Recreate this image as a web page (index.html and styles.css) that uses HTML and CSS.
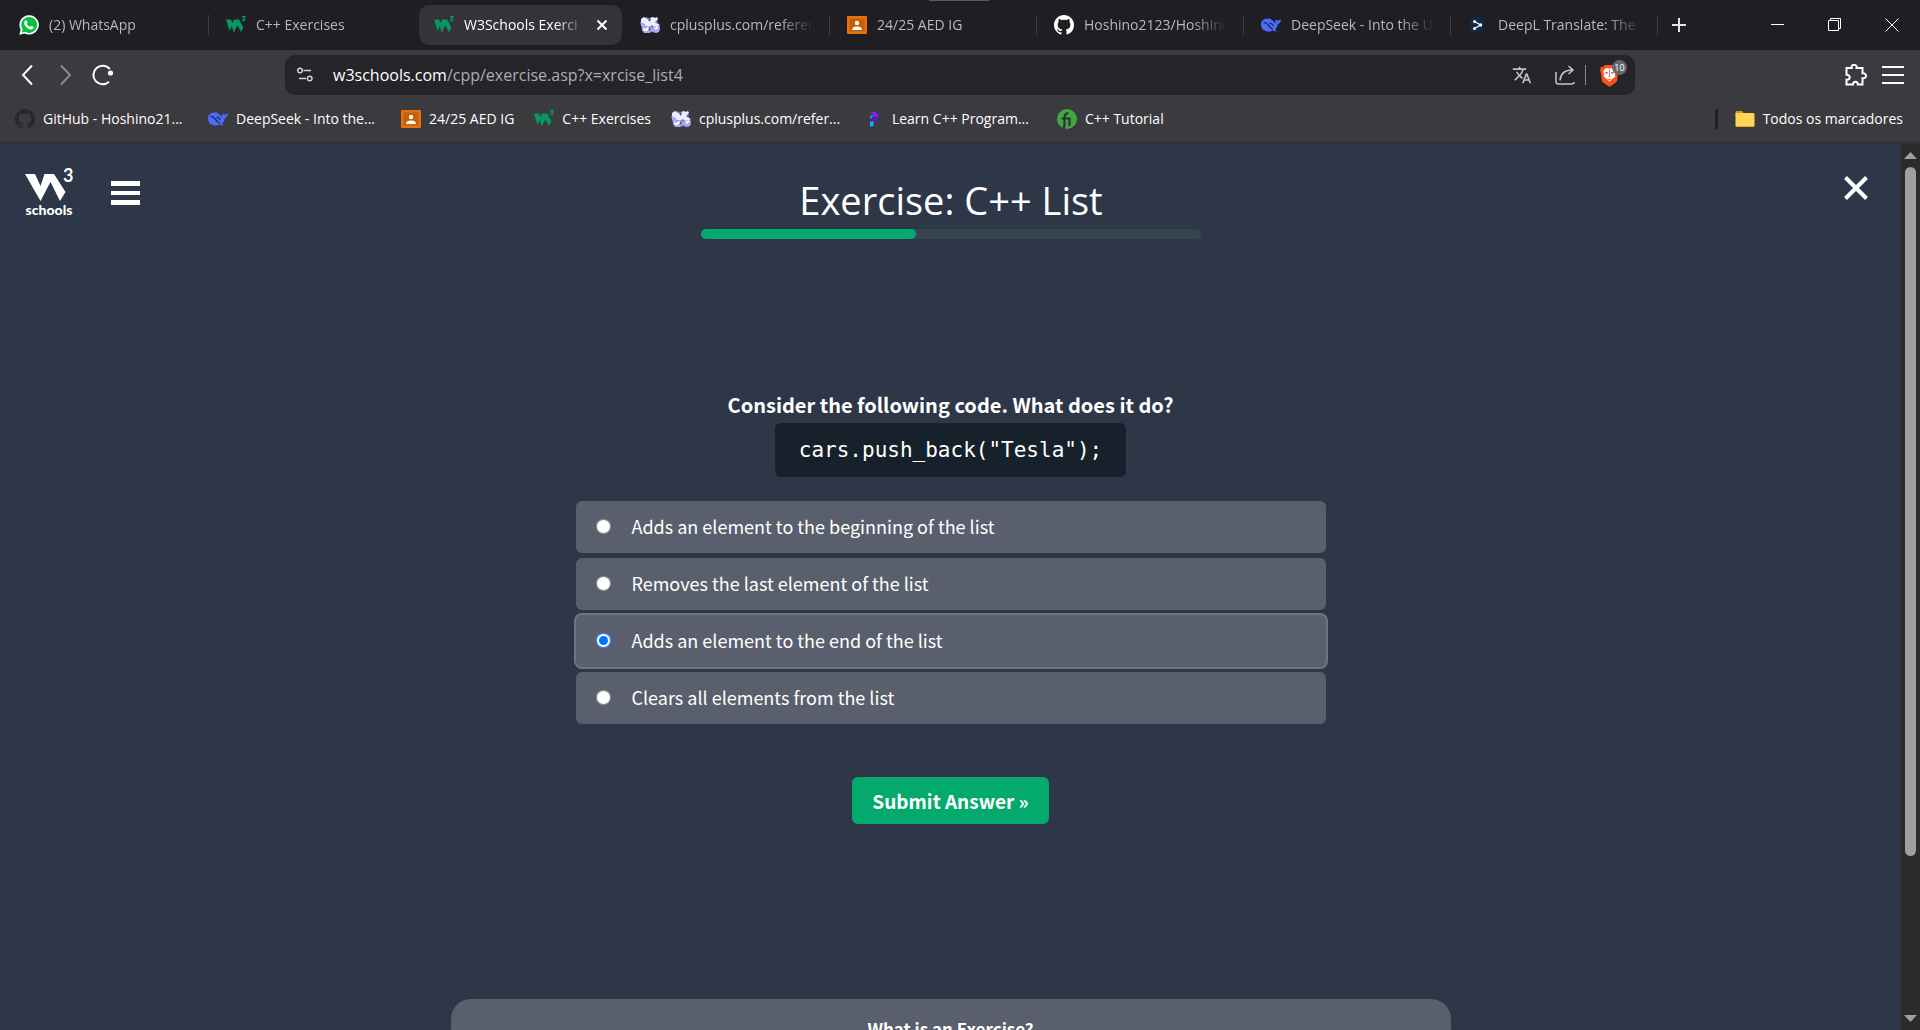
FILE: index.html
```html
<!DOCTYPE html>
<html lang="pt">
<head>
<meta charset="utf-8">
<meta name="viewport" content="width=device-width, initial-scale=1">
<title>W3Schools Exercise</title>
<link rel="stylesheet" href="styles.css">
</head>
<body>
<svg class="sprite" aria-hidden="true">
  <symbol id="i-w3" viewBox="0 0 20 20">
    <path fill="#059862" d="M0 4.500h5l1.600 3.500 1.500-3.500h5.200l4 8.300-2.300 4.200-3.700-6.800-3.100 6.800H7.500L5.800 11 3.500 16z"/>
    <path fill="none" stroke="#059862" stroke-width="1.200" d="M16 1.600h3l-1.600 1.800c2.400 0 2 2.800-1.500 2"/>
  </symbol>
  <symbol id="i-github" viewBox="0 0 16 16">
    <path fill="currentColor" d="M8 0C3.580 0 0 3.580 0 8c0 3.540 2.290 6.530 5.470 7.590.4.070.55-.17.55-.38 0-.19-.01-.82-.01-1.490-2.010.37-2.530-.49-2.690-.94-.09-.23-.48-.94-.82-1.130-.28-.15-.68-.52-.01-.53.63-.01 1.080.58 1.230.82.72 1.210 1.870.87 2.330.66.07-.52.28-.87.51-1.070-1.780-.2-3.640-.89-3.640-3.950 0-.87.31-1.590.82-2.150-.08-.2-.36-1.020.08-2.120 0 0 .67-.21 2.200.82.64-.18 1.320-.27 2-.27s1.360.09 2 .27c1.530-1.040 2.200-.82 2.200-.82.44 1.100.16 1.920.08 2.120.51.56.82 1.270.82 2.150 0 3.070-1.870 3.750-3.650 3.950.29.25.54.73.54 1.480 0 1.070-.01 1.930-.01 2.200 0 .21.15.46.55.38A8 8 0 0 0 16 8c0-4.420-3.580-8-8-8z"/>
  </symbol>
  <symbol id="i-whale" viewBox="0 0 20 20">
    <path fill="#4d6bfe" d="M0 9.500C0 5.500 3 3.600 6.500 3.800c1-.9 2.300-.9 2.500 0 2.500 1 4.300 3 5.300 5 .1-2-.2-3.500.5-4.500.6 1 1.400 1.300 2.200 1.200 1-.1 2-.8 3-.9-.2 2.600-1.500 4-3.200 4.500-.3 3-1.600 4.600-3 5.500l2 1.400c-1 .6-2.700.4-4-.4C7.500 17.600 0 16.500 0 9.500z"/>
    <path fill="none" stroke="#232a55" stroke-width="1.300" d="M2.500 7.500c3-.5 4.500 2.500 6.500 4.500 1 1 1.700 2 2.700 2.600M8.500 8.500c2-.5 3.500.8 3.600 2.700"/>
  </symbol>
  <symbol id="i-class" viewBox="0 0 20 20">
    <rect y="1" width="20" height="18" rx="1" fill="#e8710a"/>
    <rect x="2.500" y="3.500" width="15" height="13" fill="#c55f0b"/>
    <circle cx="10" cy="8" r="2.200" fill="#fff"/>
    <path fill="#fff" d="M5 15c0-2.500 2-3.500 5-3.500s5 1 5 3.500z"/>
  </symbol>
  <symbol id="i-cpp" viewBox="0 0 20 20">
    <path fill="#6f70b4" d="M2 3l4-1 3 1 4-1 4 1 1 5 2 3v4l-3 3-4-1-4 1-4 0-3-2v-4L0 8z"/>
    <path fill="#eceeff" d="M1 4l3-2 3 2h3l2-2 3 1 2-1 1 2-3 3 1 1 4 2-2 1-4 1-2-2-3 2-3-1-4 1-1-3z"/>
    <path fill="#a9a8f0" d="M1 7l4 2 1 3 4-1 3 2 4-2 3 2-1 4-4 1-3-2-3 2-5 0-2-3z"/>
    <path fill="#4f4e86" d="M8 4h3L9.500 7zM9 12l2 2-2 2z"/>
    <path fill="#fff" d="M3 13l3 1 1-2 2 1-2 3H4zM13 12l2 1 2-2 2 1-3 3z"/>
  </symbol>
  <symbol id="i-folder" viewBox="0 0 20 20">
    <path fill="#d59b14" d="M.500 3q0-1 1-1h5.500l1.500 2H16v3H.500z"/>
    <rect x=".5" y="4" width="19" height="14" rx="1.500" fill="#ffd35a"/>
    <path stroke="#e0aa2b" d="M1 17.500h18"/>
  </symbol>
</svg>

<header class="browser">
  <nav class="tabs" aria-label="Tabs">
    <a class="tab" href="#">
      <svg class="icon" viewBox="0 0 20 20"><path fill="#fff" d="M.300 19.700l1.400-5A9.700 9.700 0 1 1 5.500 18.400z"/><circle cx="10.200" cy="9.900" r="8" fill="#08c13f"/><path fill="#08c13f" d="M2.500 17.700l1.400-4 3 2.800z"/><path fill="#fff" d="M7.200 5.300c.5 0 .6.200.8.700l.6 1.500c.1.400-.8 1.100-.7 1.400.7 1.400 1.900 2.300 3.200 2.900.4.100 1-1.100 1.300-1l1.900.9c.4.200.3 1.500-.3 2-2.200 2-6.200-.2-8-3.200-1.300-2-1-5.200 1.200-5.200z"/></svg>
      <span class="tab-name">(2) WhatsApp</span>
    </a>
    <a class="tab no-rule" href="#"><svg class="icon"><use href="#i-w3"/></svg><span class="tab-name">C++ Exercises</span></a>
    <a class="tab active" href="#"><svg class="icon"><use href="#i-w3"/></svg><span class="tab-name">W3Schools Exerci</span>
      <svg class="tab-close" viewBox="0 0 12 12"><path d="M1.500 1.500l9 9M10.500 1.500l-9 9"/></svg></a>
    <a class="tab" href="#"><svg class="icon"><use href="#i-cpp"/></svg><span class="tab-name">cplusplus.com/referen</span></a>
    <a class="tab" href="#"><svg class="icon"><use href="#i-class"/></svg><span class="tab-name">24/25 AED IG</span></a>
    <a class="tab" href="#"><svg class="icon white"><use href="#i-github"/></svg><span class="tab-name">Hoshino2123/Hoshino</span></a>
    <a class="tab" href="#"><svg class="icon"><use href="#i-whale"/></svg><span class="tab-name">DeepSeek - Into the Un</span></a>
    <a class="tab" href="#">
      <svg class="icon" viewBox="0 0 20 20"><path fill="#0f2b46" d="M9 1l7 4v9l-5 3v3l-3-2-6-4V5z"/><path stroke="#fff" stroke-width="1.200" d="M6.500 6.500l6 3.500-6 3.500" fill="none"/><circle cx="6.500" cy="6.500" r="1.500" fill="#fff"/><circle cx="12.500" cy="10" r="1.700" fill="#fff"/><circle cx="6.500" cy="13.500" r="1.500" fill="#fff"/></svg>
      <span class="tab-name">DeepL Translate: The w</span>
    </a>
    <button class="new-tab" aria-label="New tab"><svg viewBox="0 0 14 14"><path d="M7 0v14M0 7h14"/></svg></button>
    <div class="window-buttons">
      <button aria-label="Minimize"><svg viewBox="0 0 14 14"><path d="M0 6.500h13"/></svg></button>
      <button aria-label="Restore"><svg viewBox="0 0 14 14"><path d="M.500 2.500h10v10H.500zM2.500 2.500v-2h10v10h-2"/></svg></button>
      <button aria-label="Close window"><svg viewBox="0 0 14 14"><path d="M.500.500l13 13M13.500.500l-13 13"/></svg></button>
    </div>
    <span class="drag-handle"></span>
  </nav>

  <div class="toolbar">
    <div class="nav-buttons">
      <button aria-label="Back"><svg viewBox="0 0 22 22"><path d="M14 1.500L5 11l9 9.500"/></svg></button>
      <button class="dim" aria-label="Forward"><svg viewBox="0 0 22 22"><path d="M6 1.500L15 11l-9 9.500"/></svg></button>
      <button aria-label="Reload"><svg viewBox="0 0 22 22"><path d="M17.800 5A9.300 9.300 0 1 0 17 17.800"/><circle cx="18.500" cy="9" r="2.600" fill="#fff" stroke="none"/></svg></button>
    </div>
    <div class="address">
      <svg class="tune" viewBox="0 0 16 16"><circle cx="3" cy="3.500" r="2.300"/><path d="M6.500 3.500H14M2 11.500h7"/><circle cx="12.700" cy="11.500" r="2.300"/></svg>
      <span class="url">w3schools.com<span class="path">/cpp/exercise.asp?x=xrcise_list4</span></span>
      <button class="translate" aria-label="Translate"><svg viewBox="0 0 24 24"><path d="M12.870 15.070l-2.540-2.510.03-.03A17.520 17.520 0 0 0 14.070 6H17V4h-7V2H8v2H1v2h11.170C11.500 7.920 10.440 9.750 9 11.350 8.070 10.320 7.300 9.190 6.690 8h-2c.73 1.630 1.730 3.170 2.980 4.560l-5.090 5.020L4 19l5-5 3.110 3.110zM18.500 10h-2L12 22h2l1.120-3h4.750L21 22h2zm-2.620 7l1.620-4.330L19.120 17z"/></svg></button>
      <button class="share" aria-label="Share"><svg viewBox="0 0 20 20"><path d="M1 7v9.500Q1 19 3.500 19h13q2.500 0 2.500-2M5 15.500C5.500 8.500 9 5 17.500 5M13.500 1L18 5l-4.500 4"/></svg></button>
      <button class="shield" aria-label="Brave Shields"><svg viewBox="0 0 20 24"><path fill="#fb4f14" d="M5 1h10l2 2 2-.300 1 4-.8 1.500L18 17.500q-.500 1.500-2 2.500l-6 4-6-4q-1.500-1-2-2.500L.700 8.200 0 6.700l1-4 2 .300z"/><path fill="#fff" d="M6 4l4 .700L14 4l2.800 3.500-1 3.500.400 2-3 2.500-3.200 3-3.200-3-3-2.500.400-2-1-3.500z"/><path fill="#fb4f14" d="M5 8l3 .500.500 1L7 10.500zM15 8l-3 .500-.500 1 1.500 1zM9.500 6h1l-.2 6 1.200.7-1.500 1-1.500-1 1.200-.7zM7 15l3 .8 3-.8-3 2z"/></svg><span class="count">10</span></button>
    </div>
    <div class="toolbar-end">
      <button aria-label="Extensions"><svg viewBox="0 0 22 22"><path d="M1.500 4h5.200c-.5-2 .6-3.200 2.300-3.200s3 1.200 2.500 3.200h6v5.200c2-.3 3.500.8 3.500 2.500s-1.500 2.800-3.500 2.500v6.300h-4.700c0-2-1-2.800-2.300-2.800s-2.500.8-2.500 2.800H1.500v-4.700c2 0 3.200-1 3.200-2.500s-1.200-2.600-3.200-2.500z"/></svg></button>
      <button aria-label="Menu"><svg viewBox="0 0 22 22"><path d="M0 3h22M0 11h22M0 19h22"/></svg></button>
    </div>
  </div>

  <nav class="bookmarks" aria-label="Bookmarks">
    <a class="wide" href="#"><svg class="icon dark"><use href="#i-github"/></svg><span>GitHub - Hoshino21...</span></a>
    <a class="wide" href="#"><svg class="icon"><use href="#i-whale"/></svg><span>DeepSeek - Into the...</span></a>
    <a href="#"><svg class="icon"><use href="#i-class"/></svg><span>24/25 AED IG</span></a>
    <a href="#"><svg class="icon"><use href="#i-w3"/></svg><span>C++ Exercises</span></a>
    <a class="wide" href="#"><svg class="icon"><use href="#i-cpp"/></svg><span>cplusplus.com/refer...</span></a>
    <a class="wide" href="#"><svg class="icon" viewBox="0 0 20 20"><path fill="#8b1ff5" d="M6 3l5-.500 4 4.500-2.500 3.500L8 12l2.500-5z"/><path fill="#5a12e8" d="M8 9l6.500-2-3 4.500L6 13z"/><path fill="#0bb5f5" d="M6 7l4-1-3.500 4zM6 13l3.500-1v5L6 17.500z"/></svg><span>Learn C++ Program...</span></a>
    <a href="#"><svg class="icon" viewBox="0 0 20 20"><circle cx="10" cy="10" r="10" fill="#41a745"/><path fill="none" stroke="#2f2f33" stroke-width="2.200" d="M6.500 20c1-2 1-3.500 1-6V9c0-3.500 1.500-5 4-4.500M4.500 9.500h8M12.500 17V8.500"/></svg><span>C++ Tutorial</span></a>
    <a class="all" href="#"><svg class="icon"><use href="#i-folder"/></svg><span>Todos os marcadores</span></a>
  </nav>
</header>

<div class="viewport">
  <main class="page">
    <div class="page-head">
      <div class="brand">
        <a class="logo" href="#" aria-label="W3Schools">
          <svg viewBox="0 0 50 48">
            <path fill="#fff" d="M1 5h10l5.500 12L20.500 5H30l11.500 18L36 32 26.500 13 16.500 32z"/>
            <text class="logo-three" x="39" y="13">3</text>
            <text class="logo-name" x="25" y="46" text-anchor="middle">schools</text>
          </svg>
        </a>
        <button class="menu" aria-label="Menu"><svg viewBox="0 0 29 24"><path fill="#fff" d="M0 0h29v5H0zM0 10h29v4H0zM0 19h29v5H0z"/></svg></button>
      </div>
      <div class="heading">
        <h1>Exercise: C++ List</h1>
        <div class="progress"><div class="progress-fill" style="width: 43%"></div></div>
      </div>
      <button class="close" aria-label="Close"><svg viewBox="0 0 24 24"><path d="M1.500 1.500l21 21M22.500 1.500l-21 21"/></svg></button>
    </div>

    <form class="exercise">
      <p class="question" id="question">Consider the following code. What does it do?</p>
      <code class="snippet">cars.push_back("Tesla");</code>
      <div class="options" role="radiogroup" aria-labelledby="question">
        <label class="option"><input type="radio" name="answer">Adds an element to the beginning of the list</label>
        <label class="option"><input type="radio" name="answer">Removes the last element of the list</label>
        <label class="option"><input type="radio" name="answer" checked>Adds an element to the end of the list</label>
        <label class="option"><input type="radio" name="answer">Clears all elements from the list</label>
      </div>
      <button class="submit" type="button">Submit Answer »</button>
    </form>

    <section class="about"><h2>What is an Exercise?</h2></section>
  </main>
  <div class="scrollbar" aria-hidden="true">
    <svg viewBox="0 0 13 7"><path d="M6.500 0L13 7H0z"/></svg>
    <div class="track"><div class="thumb"></div></div>
    <svg viewBox="0 0 13 7"><path d="M6.500 7L13 0H0z"/></svg>
  </div>
</div>
</body>
</html>
```
FILE: styles.css
```css
* { box-sizing: border-box; }

body {
  margin: 0;
  height: 100vh;
  display: flex;
  flex-direction: column;
  overflow: hidden;
  background: #2e3748;
  color: #fff;
  font-family: "Noto Sans CJK SC", "Noto Sans", sans-serif;
}

button {
  padding: 0;
  border: 0;
  background: none;
  color: inherit;
  font: inherit;
  display: flex;
  align-items: center;
  justify-content: center;
}

a { color: inherit; text-decoration: none; }
svg { display: block; }
.sprite { position: absolute; width: 0; height: 0; }
.icon { width: 20px; height: 20px; flex: none; }
.white { color: #fff; }
.dark { color: #25292e; }

/* Browser frame */
.browser {
  flex: none;
  background: #3b3a3e;
  border-bottom: 2px solid #323136;
  font-family: "Open Sans", "Noto Sans", sans-serif;
  font-size: 14px;
  line-height: 20px;
}

.tabs {
  position: relative;
  height: 50px;
  padding-left: 2px;
  display: flex;
  align-items: center;
  background: #1f1e23;
  color: #b9b9bc;
}
.tab {
  flex: 0 1 207px;
  min-width: 0;
  height: 20px;
  padding: 0 15px 0 17px;
  display: flex;
  align-items: center;
  gap: 10px;
  border-right: 1px solid #3f3e43;
}
.tab-name {
  flex: 1;
  overflow: hidden;
  white-space: nowrap;
  mask-image: linear-gradient(to right, #000 75%, transparent);
}
.no-rule { border-color: transparent; }
.tab.active {
  height: 40px;
  margin: 0 1px 0 3px;
  padding: 0 14px 0 15px;
  flex-basis: 203px;
  border: 0;
  border-radius: 10px;
  background: #343338;
  color: #fff;
}
.tab-close { width: 12px; height: 12px; flex: none; fill: none; stroke: #fff; stroke-width: 2; }
.new-tab { margin-left: 14px; }
.new-tab svg { width: 14px; height: 14px; stroke: #e4e4e6; stroke-width: 2; }
.window-buttons { margin-left: auto; display: flex; }
.window-buttons button { width: 57px; }
.window-buttons svg { width: 14px; height: 14px; fill: none; stroke: #fff; }
.drag-handle {
  position: absolute;
  top: 0;
  left: 50%;
  width: 60px;
  height: 1px;
  margin-left: -31px;
  background: #5a5a5c;
}

.toolbar {
  padding-top: 5px;
  display: grid;
  grid-template-columns: 285px 1fr 285px;
  align-items: center;
}
.toolbar svg { fill: none; stroke: #fff; stroke-width: 2; }
.nav-buttons { padding-left: 18px; display: flex; gap: 15px; }
.nav-buttons svg, .toolbar-end svg { width: 22px; height: 22px; }
.nav-buttons .dim { opacity: 0.4; }
.address {
  height: 40px;
  padding: 0 16px 0 12px;
  display: flex;
  align-items: center;
  border-radius: 10px;
  background: #252429;
}
.address .tune { width: 16px; height: 16px; stroke: #d2d2d4; stroke-width: 1.500; }
.url { flex: 1; margin-left: 20px; font-size: 16px; }
.path { color: #aeaeb1; }
.address .translate svg { width: 20px; height: 20px; fill: #c4c4c7; stroke: none; }
.share { margin-left: 23px; }
.address .share svg { width: 20px; height: 20px; stroke: #c4c4c7; stroke-width: 1.500; }
.shield { position: relative; margin-left: 10px; padding-left: 14px; border-left: 1px solid #8a8a8d; height: 20px; }
.address .shield svg { width: 19px; height: 23px; stroke: none; }
.count {
  position: absolute;
  top: -5px;
  right: -8px;
  width: 15px;
  height: 15px;
  border-radius: 50%;
  background: #636672;
  font-size: 9px;
  line-height: 15px;
  text-align: center;
}
.toolbar-end { padding-right: 16px; display: flex; justify-content: flex-end; gap: 15px; }

.bookmarks {
  height: 47px;
  padding: 0 17px 0 15px;
  display: flex;
  align-items: center;
  gap: 20px;
}
.bookmarks a { display: flex; align-items: center; gap: 8px; white-space: nowrap; }
.bookmarks .wide { width: 173px; }
.bookmarks .all { margin-left: auto; padding-left: 17px; border-left: 3px solid #222126; }

/* Page */
.viewport { flex: 1; min-height: 0; display: flex; }
.page { flex: 1; min-width: 0; overflow: hidden; }

.page-head {
  padding: 24px 33px 0 24px;
  display: grid;
  grid-template-columns: 1fr 500px 1fr;
  align-items: start;
}
.brand { display: flex; align-items: center; gap: 37px; }
.logo svg { width: 50px; height: 50px; }
.logo-three { fill: #fff; font: 700 18px "Lato", sans-serif; }
.logo-name { fill: #fff; font: 900 14px "Lato", sans-serif; }
.menu svg { width: 29px; height: 24px; }
.heading { margin: 9px -5px 0 5px; text-align: center; }
h1 {
  margin: 0 0 6px;
  font-family: "Open Sans", "Noto Sans", sans-serif;
  font-size: 38px;
  line-height: 46px;
  font-weight: 400;
}
.progress { height: 10px; border-radius: 5px; background: #38444d; }
.progress-fill { height: 10px; border-radius: 5px; background: #04aa6d; }
.close { justify-self: end; margin-top: 8px; }
.close svg { width: 24px; height: 24px; stroke: #fff; stroke-width: 4; }

.exercise {
  width: 750px;
  max-width: 100%;
  margin: 151px auto 0;
  display: flex;
  flex-direction: column;
  align-items: center;
}
.question { margin: 0 0 3px; font-size: 20px; line-height: 30px; font-weight: 700; }
.snippet {
  padding: 12px 24px;
  border-radius: 6px;
  background: #17212b;
  font-family: "DejaVu Sans Mono", monospace;
  font-size: 21px;
  line-height: 30px;
}
.options { align-self: stretch; margin-top: 24px; display: grid; gap: 5px; }
.option {
  height: 52px;
  padding: 0 20px 2px;
  display: flex;
  align-items: center;
  gap: 21px;
  border-radius: 6px;
  background: #595f6c;
  font-size: 18px;
}
.option:has(input:checked) { box-shadow: 0 0 0 2px #6f7580; }
.option input { width: 15px; height: 15px; margin: 0; accent-color: #0075ff; }
.submit {
  height: 47px;
  margin-top: 53px;
  padding: 0 20px;
  border-radius: 6px;
  background: #04aa6d;
  font-size: 19px;
  font-weight: 700;
}

.about {
  width: 1000px;
  max-width: 100%;
  margin: 175px auto 0;
  padding: 16px 20px 40px;
  border-radius: 20px;
  background: #595f6c;
  text-align: center;
}
.about h2 { margin: 0; font-size: 17px; line-height: 28px; font-weight: 700; }

.scrollbar {
  width: 19px;
  padding: 8px 0;
  display: flex;
  flex-direction: column;
  align-items: center;
  gap: 8px;
  background: #2b2b2b;
}
.scrollbar svg { width: 13px; height: 7px; fill: #9f9f9f; }
.track { flex: 1; width: 11px; }
.thumb { height: 82%; border-radius: 6px; background: #9f9f9f; }
```
